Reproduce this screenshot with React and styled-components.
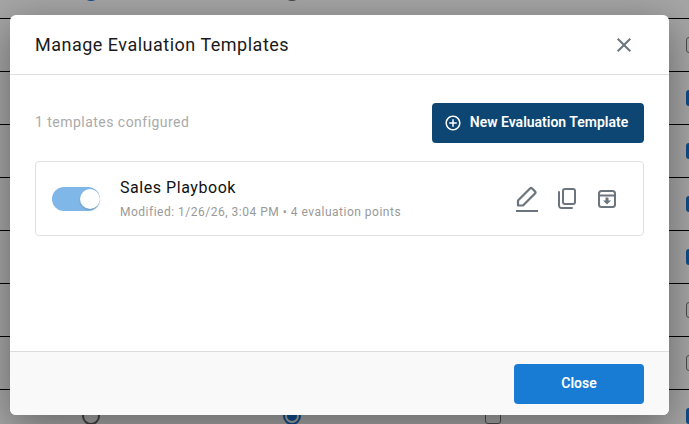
import React from "react";
import styled, { createGlobalStyle } from "styled-components";
import { MdClose, MdAddCircleOutline, MdCheck } from "react-icons/md";

const Global = createGlobalStyle`
  html, body { margin: 0; padding: 0; height: 100%; overflow: hidden; background: #fff; }
  body { font-family: Roboto, "Liberation Sans", sans-serif; }
  * { box-sizing: border-box; }
`;

const Page = styled.div`
  width: 689px;
  height: 424px;
  overflow: hidden;
  position: relative;
`;

const RowList = styled.div`
  margin-top: -34px;
  margin-left: -10px;
  width: 820px;
`;

const Row = styled.div`
  height: 53px;
  border-bottom: 1px solid #000;
  display: grid;
  grid-template-columns: repeat(4, 201px);
  justify-items: center;
  align-items: center;
`;

const Radio = styled.span`
  width: 18px;
  height: 18px;
  border-radius: 50%;
  border: 2px solid ${(p) => (p.$on ? "#1976d2" : "#666")};
  display: flex;
  align-items: center;
  justify-content: center;

  &::after {
    content: "";
    width: 10px;
    height: 10px;
    border-radius: 50%;
    background: ${(p) => (p.$on ? "#1976d2" : "transparent")};
  }
`;

const Check = styled.span`
  width: 16px;
  height: 16px;
  border-radius: 3px;
  border: ${(p) => (p.$on ? "none" : "1.5px solid #777")};
  background: ${(p) => (p.$on ? "#1976d2" : "#fff")};
  color: #fff;
  display: flex;
  align-items: center;
  justify-content: center;
  font-size: 14px;
`;

const Backdrop = styled.div`
  position: absolute;
  inset: 0;
  background: rgba(0, 0, 0, 0.35);
  padding: 15px 0 0 10px;
`;

const Modal = styled.div`
  width: 659px;
  height: 400px;
  background: #fff;
  border-radius: 6px;
  overflow: hidden;
  display: flex;
  flex-direction: column;
  box-shadow: 0 10px 40px rgba(0, 0, 0, 0.4);
`;

const Header = styled.div`
  height: 60px;
  flex: none;
  display: flex;
  align-items: center;
  justify-content: space-between;
  padding: 0 33px 0 25px;
  border-bottom: 1px solid #e0e0e0;
`;

const Title = styled.h2`
  margin: 0;
  font-size: 18px;
  font-weight: 400;
  letter-spacing: 0.5px;
  color: #1a1a1a;
`;

const CloseButton = styled.button`
  border: none;
  background: none;
  padding: 0;
  display: flex;
  color: #6c757d;
`;

const Body = styled.div`
  flex: 1;
  padding: 28px 25px 0;
`;

const TopRow = styled.div`
  display: flex;
  align-items: center;
  justify-content: space-between;
  margin-bottom: 18px;
`;

const Count = styled.span`
  font-size: 14px;
  color: #aaa;
  letter-spacing: 0.47px;
  padding-bottom: 2px;
`;

const PrimaryButton = styled.button`
  height: 40px;
  width: ${(p) => p.$width};
  border: none;
  border-radius: 4px;
  background: ${(p) => p.$bg};
  color: #fff;
  font-family: inherit;
  font-size: 14px;
  font-weight: 600;
  padding: ${(p) => (p.$icon ? "0 4px 0 0" : "0 0 2px")};
  display: flex;
  align-items: center;
  justify-content: center;
  gap: 8px;
`;

const ButtonLabel = styled.span`
  padding-bottom: 2px;
`;

const Card = styled.div`
  height: 75px;
  border: 1px solid #e0e0e0;
  border-radius: 4px;
  display: flex;
  align-items: center;
  padding: 0 16px;
`;

const Toggle = styled.span`
  width: 48px;
  height: 24px;
  border-radius: 12px;
  background: #7fb8e8;
  display: flex;
  align-items: center;
  justify-content: flex-end;
  margin-right: 20px;

  &::after {
    content: "";
    width: 20px;
    height: 20px;
    border-radius: 50%;
    background: #fff;
    box-shadow: 0 1px 2px rgba(0, 0, 0, 0.2);
  }
`;

const Info = styled.div`
  flex: 1;
`;

const Name = styled.div`
  font-size: 16px;
  font-weight: 450;
  letter-spacing: 0.55px;
  color: #111;
  margin-bottom: 8px;
`;

const Meta = styled.div`
  font-size: 12px;
  letter-spacing: 0.5px;
  color: #999;
`;

const Actions = styled.div`
  display: flex;
  align-items: center;
`;

const ActionButton = styled.button`
  width: 40px;
  height: 40px;
  border: none;
  background: none;
  padding: 0;
  display: flex;
  align-items: center;
  justify-content: center;
  color: #6c757d;
`;

const Footer = styled.div`
  height: 64px;
  flex: none;
  background: #f9f9f9;
  border-top: 1px solid #ddd;
  display: flex;
  align-items: center;
  justify-content: flex-end;
  padding: 0 25px;
`;

const PencilIcon = () => (
  <svg width="24" height="26" viewBox="0 0 24 26" fill="none" stroke="currentColor" strokeWidth="2.2">
    <path d="M3 19v-4.5L15 2.5a1.5 1.5 0 0 1 2.1 0l2.9 2.9a1.5 1.5 0 0 1 0 2.1L8 19.5H3z" strokeLinejoin="round" />
    <path d="M1 25h22" />
  </svg>
);

const CopyIcon = () => (
  <svg width="18" height="21" viewBox="0 0 18 21" fill="none" stroke="currentColor" strokeWidth="2">
    <rect x="5" y="1" width="12" height="15" rx="2" />
    <path d="M1 4v13.5A2.5 2.5 0 0 0 3.5 20H14" strokeLinecap="round" />
  </svg>
);

const ArchiveIcon = () => (
  <svg width="18" height="18" viewBox="0 0 18 18" fill="none" stroke="currentColor" strokeWidth="2">
    <rect x="1" y="1" width="16" height="16" rx="2.5" />
    <path d="M1 5.5h16" />
    <path d="M7.5 7.5h3v3H13L9 14.5l-4-4h2.5z" fill="currentColor" stroke="none" />
  </svg>
);

const rows = [
  [true, false, false, false],
  [false, true, false, false],
  [false, true, false, true],
  [false, true, false, true],
  [false, true, false, true],
  [false, true, false, true],
  [false, true, false, false],
  [false, true, false, false],
  [false, true, false, true],
];

export default function App() {
  return (
    <Page>
      <Global />
      <RowList>
        {rows.map((r, i) => (
          <Row key={i}>
            <Radio $on={r[0]} />
            <Radio $on={r[1]} />
            <Check $on={r[2]}>{r[2] && <MdCheck />}</Check>
            <Check $on={r[3]}>{r[3] && <MdCheck />}</Check>
          </Row>
        ))}
      </RowList>
      <Backdrop>
        <Modal>
          <Header>
            <Title>Manage Evaluation Templates</Title>
            <CloseButton><MdClose size={24} /></CloseButton>
          </Header>
          <Body>
            <TopRow>
              <Count>1 templates configured</Count>
              <PrimaryButton $bg="#0d4672" $width="212px" $icon>
                <MdAddCircleOutline size={18} />
                <ButtonLabel>New Evaluation Template</ButtonLabel>
              </PrimaryButton>
            </TopRow>
            <Card>
              <Toggle />
              <Info>
                <Name>Sales Playbook</Name>
                <Meta>Modified: 1/26/26, 3:04 PM • 4 evaluation points</Meta>
              </Info>
              <Actions>
                <ActionButton><PencilIcon /></ActionButton>
                <ActionButton><CopyIcon /></ActionButton>
                <ActionButton><ArchiveIcon /></ActionButton>
              </Actions>
            </Card>
          </Body>
          <Footer>
            <PrimaryButton $bg="#187bd4" $width="130px">Close</PrimaryButton>
          </Footer>
        </Modal>
      </Backdrop>
    </Page>
  );
}
